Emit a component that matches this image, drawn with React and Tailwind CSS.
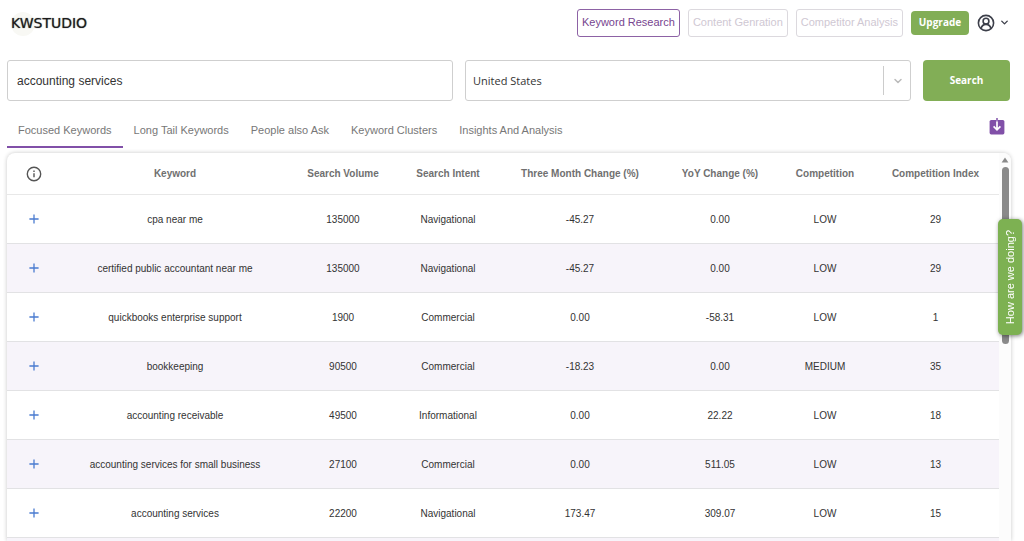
import { ChevronDown } from 'lucide-react';

const NAV_ITEMS = ['Keyword Research', 'Content Genration', 'Competitor Analysis'];

const TABS = [
  'Focused Keywords',
  'Long Tail Keywords',
  'People also Ask',
  'Keyword Clusters',
  'Insights And Analysis',
];

const COLUMNS = [
  { label: 'Keyword', width: 'w-[228px]' },
  { label: 'Search Volume', width: 'w-[108px]' },
  { label: 'Search Intent', width: 'w-[102px]' },
  { label: 'Three Month Change (%)', width: 'w-[162px]' },
  { label: 'YoY Change (%)', width: 'w-[118px]' },
  { label: 'Competition', width: 'w-[92px]' },
  { label: 'Competition Index', width: 'w-[129px]' },
];

const ROWS = [
  ['cpa near me', '135000', 'Navigational', '-45.27', '0.00', 'LOW', '29'],
  ['certified public accountant near me', '135000', 'Navigational', '-45.27', '0.00', 'LOW', '29'],
  ['quickbooks enterprise support', '1900', 'Commercial', '0.00', '-58.31', 'LOW', '1'],
  ['bookkeeping', '90500', 'Commercial', '-18.23', '0.00', 'MEDIUM', '35'],
  ['accounting receivable', '49500', 'Informational', '0.00', '22.22', 'LOW', '18'],
  ['accounting services for small business', '27100', 'Commercial', '0.00', '511.05', 'LOW', '13'],
  ['accounting services', '22200', 'Navigational', '173.47', '309.07', 'LOW', '15'],
];

const UserIcon = () => (
  <svg viewBox="0 0 18 18" className="size-[18px]" fill="none" stroke="#3c3f4a" strokeWidth="1.6">
    <circle cx="9" cy="9" r="7.6" />
    <circle cx="9" cy="7.2" r="2.9" />
    <path d="M4.1 14.6c.5-2.6 2.3-4.2 4.9-4.2s4.4 1.6 4.9 4.2" />
  </svg>
);

const InfoIcon = () => (
  <svg viewBox="0 0 16 16" className="mx-auto size-4" fill="none" stroke="#555" strokeWidth="1.4">
    <circle cx="8" cy="8" r="6.7" />
    <path d="M8 7.2v4.1" />
    <path d="M8 4.5v1.4" />
  </svg>
);

const PlusIcon = () => (
  <svg viewBox="0 0 10 10" className="size-2.5" fill="none" stroke="#4a7bd0" strokeWidth="1.3">
    <path d="M5 .4v9.2M.4 5h9.2" />
  </svg>
);

const DownloadIcon = () => (
  <svg viewBox="0 0 16 17" className="h-[17px] w-4">
    <rect x="0.6" y="2" width="14.8" height="14.4" rx="1.6" fill="#8150a8" />
    <path d="M8 2v9.5M4.6 8.4 8 11.8l3.4-3.4" fill="none" stroke="#fff" strokeWidth="1.7" />
    <path d="M8 0v3.4" stroke="#8150a8" strokeWidth="1.5" />
  </svg>
);

const Header = () => (
  <header className="flex h-[45px] items-center justify-between">
    <a
      href="#"
      className="relative z-0 ml-1 font-['DejaVu_Sans'] text-[14px] leading-none text-[#1c1c1c] [text-shadow:0_0_1px_#555]"
    >
      <span className="absolute -top-1 left-0 -z-10 size-6 rounded-full bg-[#f8f8f4]" />
      KWSTUDIO
    </a>
    <div className="flex items-center">
      <nav className="flex gap-2">
        {NAV_ITEMS.map((item, i) => (
          <button
            key={item}
            className={
              i === 0
                ? 'h-7 rounded-[3px] border border-[#8d62a5] px-1 text-[11px] text-[#77458f]'
                : 'h-7 rounded-[3px] border border-[#dcd9de] px-1 text-[11px] text-[#cfc8d3]'
            }
          >
            {item}
          </button>
        ))}
      </nav>
      <button className="ml-2 h-6 w-[58px] rounded bg-[#82ae56] font-['Open_Sans'] text-[10px] font-bold text-white">
        Upgrade
      </button>
      <button className="ml-2 flex items-center gap-1" aria-label="Account">
        <UserIcon />
        <ChevronDown className="size-[11px] text-[#3c3f4a]" strokeWidth={3} />
      </button>
    </div>
  </header>
);

const SearchBar = () => (
  <form
    className="mt-[15px] grid grid-cols-[1fr_1fr_87px] gap-3"
    onSubmit={(e) => e.preventDefault()}
  >
    <input
      type="text"
      aria-label="Keyword"
      defaultValue="accounting services"
      className="h-[41px] w-full rounded-[3px] border border-[#cfcfcf] px-[9px] text-[12px] text-[#333] outline-none"
    />
    <div className="relative">
      <select
        aria-label="Country"
        className="h-[41px] w-full appearance-none rounded-[3px] border border-[#cfcfcf] bg-white pt-0.5 pl-[7px] font-['Open_Sans'] text-[11px] text-[#333] outline-none"
      >
        <option>United States</option>
      </select>
      <div className="pointer-events-none absolute inset-y-[6px] right-0 flex w-7 items-center justify-center border-l border-[#ccc]">
        <ChevronDown className="size-3 text-[#bbb]" strokeWidth={3} />
      </div>
    </div>
    <button className="h-[41px] rounded bg-[#82ae56] font-['Open_Sans'] text-[10px] font-bold text-white">
      Search
    </button>
  </form>
);

const Tabs = () => (
  <div className="mt-3 flex items-start justify-between">
    <div role="tablist" className="flex">
      {TABS.map((tab, i) => (
        <button
          key={tab}
          role="tab"
          aria-selected={i === 0}
          className={
            i === 0
              ? 'h-[35px] border-b-2 border-[#8150a8] px-[11px] pt-0.5 text-[11px] text-[#777]'
              : 'h-[35px] border-b-2 border-transparent px-[11px] pt-0.5 text-[11px] text-[#777]'
          }
        >
          {tab}
        </button>
      ))}
    </div>
    <button aria-label="Download" className="mt-[5px] mr-[5px]">
      <DownloadIcon />
    </button>
  </div>
);

const KeywordTable = () => (
  <table className="w-full table-fixed border-separate border-spacing-0 text-center text-[10px] text-[#333]">
    <thead>
      <tr className="h-[42px] text-[#707070]">
        <th className="w-[54px] border-b border-[#e8e8e8]" aria-label="Info">
          <InfoIcon />
        </th>
        {COLUMNS.map((col) => (
          <th key={col.label} className={`border-b border-[#e8e8e8] font-bold ${col.width}`}>
            {col.label}
          </th>
        ))}
      </tr>
    </thead>
    <tbody>
      {ROWS.map((row) => (
        <tr key={row[0]} className="h-[49px] even:bg-[#f7f4fa]">
          <td className="border-b border-[#e2e2e4]">
            <button aria-label="Add keyword" className="mx-auto block">
              <PlusIcon />
            </button>
          </td>
          {row.map((value, i) => (
            <td key={i} className="border-b border-[#e2e2e4]">
              {value}
            </td>
          ))}
        </tr>
      ))}
      <tr className="h-[49px] bg-[#f7f4fa]">
        <td colSpan={8} />
      </tr>
    </tbody>
  </table>
);

const ScrollTrack = () => (
  <div aria-hidden="true" className="flex w-3 shrink-0 flex-col items-center bg-[#fcfcfc] pt-1">
    <svg viewBox="0 0 8 6" className="h-1.5 w-2">
      <path d="M4 .4 7.4 5.6H.6z" fill="#8a8a8a" />
    </svg>
    <div className="mt-1 h-[177px] w-[7px] rounded-full bg-[#8a8a8a]" />
  </div>
);

const App = () => (
  <div className="flex h-screen flex-col overflow-hidden bg-white pr-3.5 pl-[7px] font-['Liberation_Sans',Arial,sans-serif]">
    <Header />
    <SearchBar />
    <Tabs />
    <main className="mt-[5px] -mr-px flex min-h-0 flex-1 overflow-hidden rounded-t-lg shadow-[0_0_4px_rgba(0,0,0,0.22)]">
      <div className="min-w-0 flex-1 overflow-hidden">
        <KeywordTable />
      </div>
      <ScrollTrack />
    </main>

    {/* Feedback tab on the screen edge */}
    <button className="fixed top-[219px] right-0.5 flex h-[116px] w-6 items-center justify-center rounded-[5px] bg-[#7db152] text-[11px] text-white shadow-[1px_1px_4px_rgba(0,0,0,0.5)]">
      <span className="rotate-180 [writing-mode:vertical-rl]">How are we doing?</span>
    </button>
  </div>
);

export default App;
